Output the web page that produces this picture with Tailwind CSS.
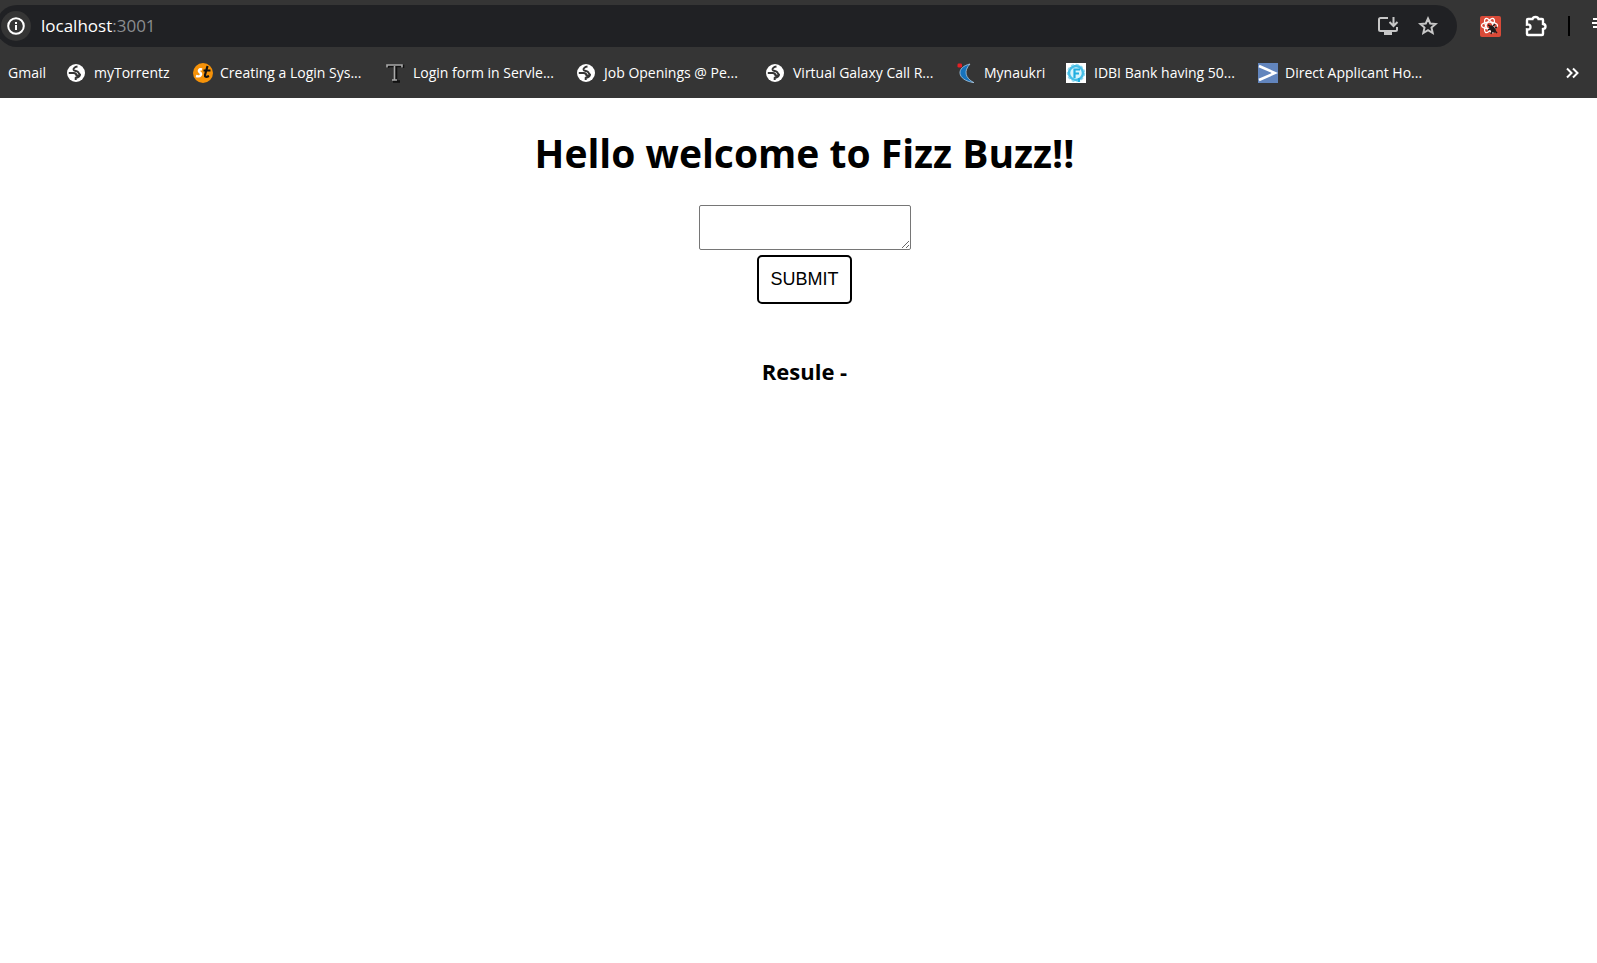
<!DOCTYPE html>
<html lang="en">
<head>
<meta charset="utf-8">
<title>Fizz Buzz</title>
<script src="https://cdn.jsdelivr.net/npm/@tailwindcss/browser@4"></script>
</head>
<body class="min-h-screen overflow-x-hidden bg-white text-black font-['Segoe_UI','Open_Sans',sans-serif]">
<svg class="hidden" aria-hidden="true">
  <symbol id="globe" viewBox="0 0 18 18">
    <circle cx="9" cy="9" r="9" fill="#fff"/>
    <path d="M1.800 9h4.700c2 0 3 .8 3 2.500H12.500M10.500 2.600C7.500 3 6.300 4.500 6.600 5.800c.4 1.500 3.800.9 4.600 2.400.5 1.300 1.300 1.600 1.800 2.300 0 2.500-2 3-4.300 3.500V16" fill="none" stroke="#353535" stroke-width="2"/>
  </symbol>
</svg>
<header class="bg-[#353535] text-white">
  <div class="flex items-center pt-[5px]">
    <div class="-ml-1 flex h-[42px] flex-1 items-center rounded-full bg-[#202124] pr-[18px]">
      <button aria-label="View site information" class="ml-[5px] flex size-[30px] items-center justify-center rounded-full bg-[#353535]">
        <svg class="size-[18px]" viewBox="0 0 18 18" fill="none" stroke="#fff" stroke-width="2"><circle cx="9" cy="9" r="7.800"/><path d="M9 8v5M9 5v2"/></svg>
      </button>
      <p class="ml-[10px] flex-1 text-[17px] leading-6">localhost<span class="text-[#8b8d90]">:3001</span></p>
      <button aria-label="Install app" class="mr-[18px]">
        <svg class="size-[22px]" viewBox="0 0 22 22" fill="none" stroke="#c7c7c7" stroke-width="2"><path d="M11 3H3.500Q2 3 2 4.500v10Q2 16 3.500 16h15q1.500 0 1.500-1.500V12"/><path d="M16.500 2v8M12.500 7l4 4 4-4"/><path d="M7 18.500h8" stroke-width="3"/></svg>
      </button>
      <button aria-label="Bookmark this tab">
        <svg class="size-[22px]" viewBox="0 0 22 22" fill="none" stroke="#c7c7c7" stroke-width="2"><path d="M11 3.500l2.200 5 5.400.5-4.100 3.600 1.200 5.400-4.700-2.800L6.300 18l1.200-5.400L3.400 9l5.400-.5z"/></svg>
      </button>
    </div>
    <div class="flex w-[140px] shrink-0 items-center pl-[23px]">
      <button aria-label="React extension" class="shrink-0">
        <svg class="size-[21px]" viewBox="0 0 21 21"><rect width="21" height="21" rx="2" fill="#d94a38"/><g fill="none" stroke="#fff" stroke-width="1.300"><ellipse cx="9.500" cy="9.500" rx="8" ry="3.400"/><ellipse cx="9.500" cy="9.500" rx="8" ry="3.400" transform="rotate(60 9.500 9.500)"/><ellipse cx="9.500" cy="9.500" rx="8" ry="3.400" transform="rotate(120 9.500 9.500)"/></g><ellipse cx="12.500" cy="13" rx="2.400" ry="4.200" transform="rotate(-40 12.500 13)" fill="#221b1b"/><path d="M10 10l-2-1M13 10l2-2M10 13l-2 1M12 15l-1 3M15 12l2-1M15 15l2 2" stroke="#221b1b" stroke-width="1.500"/></svg>
      </button>
      <button aria-label="Extensions" class="ml-6 shrink-0">
        <svg class="size-[22px]" viewBox="0 0 22 22" fill="none" stroke="#fff" stroke-width="2.400"><path d="M3 4h4.500Q8 2 10.500 2T13.500 4H17q1 0 1 1v4q2.500.2 2.500 2.500T18 14v5q0 1-1 1H3q-1 0-1-1v-4.500Q5.500 15 5.500 12T2 9.500V5q0-1 1-1z"/></svg>
      </button>
      <span class="ml-[21px] h-5 w-0.5 shrink-0 bg-black"></span>
      <button aria-label="Menu" class="ml-[22px] shrink-0 pb-1.5">
        <svg class="size-[18px]" viewBox="0 0 18 18" stroke="#fff" stroke-width="2"><path d="M1 5h16M0 9h17M1 13h16"/></svg>
      </button>
    </div>
  </div>
  <nav aria-label="Bookmarks" class="flex h-[51px] items-center pl-2 text-[14px] leading-5 whitespace-nowrap">
    <a href="#" class="w-[58px]">Gmail</a>
    <a href="#" class="flex w-[127px] items-center gap-2"><svg class="mx-px size-[18px]"><use href="#globe"/></svg>myTorrentz</a>
    <a href="#" class="flex w-48 items-center gap-[7px]"><svg class="size-5" viewBox="0 0 20 20"><circle cx="10" cy="10" r="10" fill="#f59209"/><path d="M9 6.500C6 5.500 5 8 7 9.500s1 5-4 3.500" fill="none" stroke="#fff" stroke-width="2.400"/><path d="M14.500 3l-2.500 9q-.5 3 4 1M10.500 7.500h7" fill="none" stroke="#111" stroke-width="2.200"/></svg>Creating a Login Sys...</a>
    <a href="#" class="flex w-[191px] items-center gap-2"><svg class="size-5" viewBox="0 0 20 20" fill="none"><path d="M3 5V3h15v2M11 4v14M8 18.500h7" stroke="#111" stroke-width="2.500"/><path d="M2 4.500V2h15v2.500M9.500 3v14M7 17h5" stroke="#aaa" stroke-width="1.600"/></svg>Login form in Servle...</a>
    <a href="#" class="flex w-[189px] items-center gap-2"><svg class="mx-px size-[18px]"><use href="#globe"/></svg>Job Openings @ Pe...</a>
    <a href="#" class="flex w-[191px] items-center gap-2"><svg class="mx-px size-[18px]"><use href="#globe"/></svg>Virtual Galaxy Call R...</a>
    <a href="#" class="flex w-[110px] items-center gap-2"><svg class="size-5" viewBox="0 0 20 20"><path d="M14 1C0 4 0 17 18 19.700 9 15 7.500 8 14 1z" fill="#1673bd" stroke="#a9c6de" stroke-width=".8"/><rect x="1.500" y=".5" width="4.500" height="4" rx="1.200" fill="#e51f24"/></svg>Mynaukri</a>
    <a href="#" class="flex w-48 items-center gap-2"><svg class="size-5" viewBox="0 0 20 20"><path d="M0 0h20v20H0z" fill="#fff"/><circle cx="10" cy="10" r="7" fill="#d6f3fc" stroke="#45bfe8" stroke-width="2.500"/><circle cx="10" cy="10" r="8.600" fill="none" stroke="#8dd8f0" stroke-width="1.200" stroke-dasharray="3 2"/><path d="M8.500 15V6.500H14M8.500 10.500H13M13 15v4" fill="none" stroke="#20aee0" stroke-width="2.200"/></svg>IDBI Bank having 50...</a>
    <a href="#" class="flex items-center gap-[7px]"><svg class="size-5" viewBox="0 0 20 20"><path d="M0 0h20v20H0z" fill="#6285bd"/><path d="M1 3l16 7L1 17" fill="none" stroke="#fff" stroke-width="2.600"/></svg>Direct Applicant Ho...</a>
    <button aria-label="More bookmarks" class="mr-[18px] ml-auto"><svg class="size-[14px]" viewBox="0 0 14 14" fill="none" stroke="#fff" stroke-width="2"><path d="M2 2.500L6.500 7 2 11.500M8 2.500L12.500 7 8 11.500"/></svg></button>
  </nav>
</header>
<main class="flex flex-col items-center pt-7 pl-3">
  <h1 class="text-[39px] leading-[54px] font-bold">Hello welcome to Fizz Buzz!!</h1>
  <textarea aria-label="Number" class="mt-[25px] h-[45px] w-[212px] resize rounded-[2px] border border-[#767676] bg-white p-0.5"></textarea>
  <button class="mt-[5px] h-[49px] rounded-[5px] border-2 border-black px-[11px] pb-0.5 font-['Liberation_Sans',sans-serif] text-lg">SUBMIT</button>
  <h2 class="mt-[52px] text-[22px] leading-[30px] font-bold">Resule -</h2>
</main>
</body>
</html>
